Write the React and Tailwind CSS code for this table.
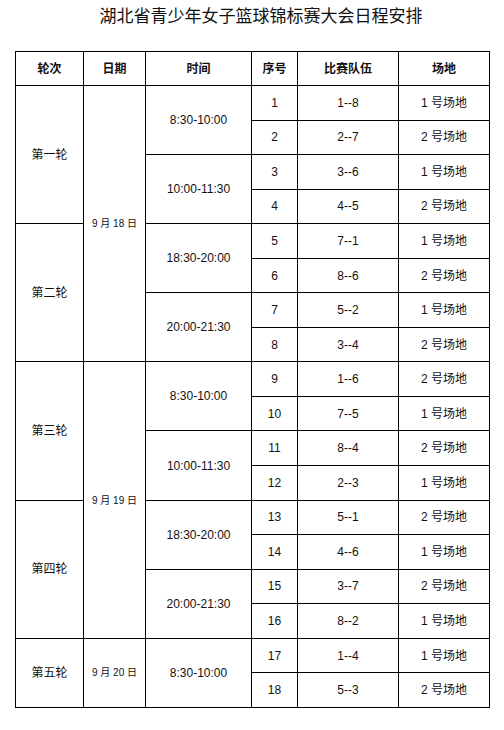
const rounds = [
  {
    name: "第一轮",
    slots: [
      { time: "8:30-10:00", games: [["1", "1--8", "1 号场地"], ["2", "2--7", "2 号场地"]] },
      { time: "10:00-11:30", games: [["3", "3--6", "1 号场地"], ["4", "4--5", "2 号场地"]] },
    ],
  },
  {
    name: "第二轮",
    slots: [
      { time: "18:30-20:00", games: [["5", "7--1", "1 号场地"], ["6", "8--6", "2 号场地"]] },
      { time: "20:00-21:30", games: [["7", "5--2", "1 号场地"], ["8", "3--4", "2 号场地"]] },
    ],
  },
  {
    name: "第三轮",
    slots: [
      { time: "8:30-10:00", games: [["9", "1--6", "2 号场地"], ["10", "7--5", "1 号场地"]] },
      { time: "10:00-11:30", games: [["11", "8--4", "2 号场地"], ["12", "2--3", "1 号场地"]] },
    ],
  },
  {
    name: "第四轮",
    slots: [
      { time: "18:30-20:00", games: [["13", "5--1", "2 号场地"], ["14", "4--6", "1 号场地"]] },
      { time: "20:00-21:30", games: [["15", "3--7", "2 号场地"], ["16", "8--2", "1 号场地"]] },
    ],
  },
  {
    name: "第五轮",
    slots: [
      { time: "8:30-10:00", games: [["17", "1--4", "1 号场地"], ["18", "5--3", "2 号场地"]] },
    ],
  },
];

// first round index of each date -> [label, span class]
const dates = {
  0: ["9 月 18 日", "row-span-8"],
  2: ["9 月 19 日", "row-span-8"],
  4: ["9 月 20 日", "row-span-2"],
};

const cell = "flex items-center justify-center border-r border-b border-black text-center";

export default function App() {
  const cells = [];
  rounds.forEach((r, ri) => {
    r.slots.forEach((s, si) => {
      s.games.forEach((g, gi) => {
        const key = `${ri}-${si}-${gi}`;
        if (si === 0 && gi === 0) {
          cells.push(
            <div key={key + "r"} className={`${cell} ${r.slots.length === 2 ? "row-span-4" : "row-span-2"}`}>
              {r.name}
            </div>
          );
          if (dates[ri]) {
            cells.push(
              <div key={key + "d"} className={`${cell} ${dates[ri][1]} text-[10px]`}>
                {dates[ri][0]}
              </div>
            );
          }
        }
        if (gi === 0) {
          cells.push(
            <div key={key + "t"} className={`${cell} row-span-2`}>
              {s.time}
            </div>
          );
        }
        cells.push(
          <div key={key + "n"} className={cell}>{g[0]}</div>,
          <div key={key + "m"} className={cell}>{g[1]}</div>,
          <div key={key + "c"} className={cell}>{g[2]}</div>
        );
      });
    });
  });

  return (
    <div className="min-h-[730px] w-[504px] bg-white pt-[5px] text-[12px] text-[#111] font-['Liberation_Sans','Noto_Sans_CJK_SC',sans-serif]">
      <h1 className="pl-[18px] text-center text-[17px] leading-[24px] font-normal">
        湖北省青少年女子篮球锦标赛大会日程安排
      </h1>
      <div className="ml-[15px] mt-[22px] grid w-fit grid-cols-[68px_62px_106px_46px_101px_91px] grid-rows-[34px_repeat(18,34.55px)] border-l border-t border-black">
        <div className={`${cell} font-bold`}>轮次</div>
        <div className={`${cell} font-bold`}>日期</div>
        <div className={`${cell} font-bold`}>时间</div>
        <div className={`${cell} font-bold`}>序号</div>
        <div className={`${cell} font-bold`}>比赛队伍</div>
        <div className={`${cell} font-bold`}>场地</div>
        {cells}
      </div>
    </div>
  );
}
